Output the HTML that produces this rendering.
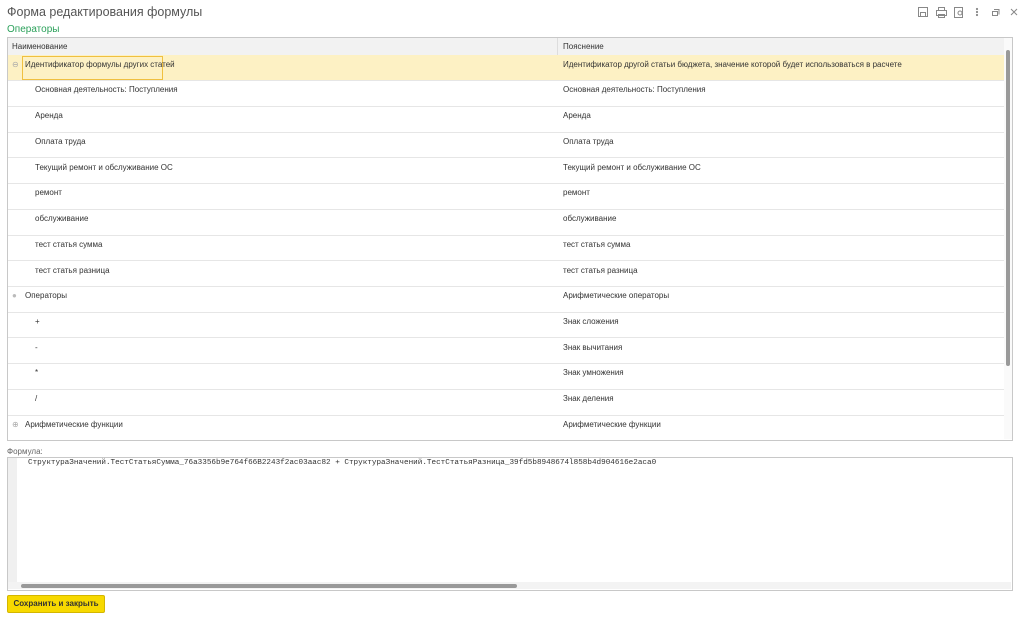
<!DOCTYPE html>
<html><head><meta charset="utf-8"><style>
body{margin:0;width:1024px;height:618px;background:#fff;font-family:"Liberation Sans",sans-serif;position:relative;overflow:hidden;color:#333}
.abs{position:absolute}
.t{font-size:8px;white-space:nowrap}
.row{position:absolute;left:8px;width:996px;height:25px;border-bottom:1px solid #e6e6e6}
</style></head><body>
<div class="abs" style="left:7px;top:5px;font-size:12.5px;color:#555">Форма редактирования формулы</div>
<div class="abs" style="left:7px;top:24px;font-size:10px;color:#2aa05a">Операторы</div>
<svg class="abs" style="left:915px;top:6px" width="105" height="14" fill="none" stroke="#888" stroke-width="1">
<rect x="3.5" y="1.5" width="9" height="9"/><rect x="5.5" y="6.5" width="5" height="4"/>
<rect x="21.5" y="4.5" width="10" height="5"/><rect x="23.5" y="1.5" width="6" height="3"/><rect x="23.5" y="8.5" width="6" height="3"/>
<rect x="39.5" y="1.5" width="8" height="10"/><circle cx="45" cy="7" r="2"/>
<circle cx="62" cy="3" r=".6"/><circle cx="62" cy="6" r=".6"/><circle cx="62" cy="9" r=".6"/>
<rect x="77.5" y="5.5" width="5" height="4"/><path d="M79 3.5h5v5"/>
<path d="M96 3l6 6M102 3l-6 6"/>
</svg>
<div class="abs" style="left:7px;top:37px;width:1004px;height:402px;border:1px solid #c8c8c8"></div>
<div class="abs" style="left:8px;top:38px;width:996px;height:17px;background:#f2f2f2;border-bottom:1px solid #ddd"></div>
<div class="abs" style="left:557px;top:38px;width:1px;height:17px;background:#ddd"></div>
<div class="abs t" style="left:12px;top:42px">Наименование</div>
<div class="abs t" style="left:563px;top:42px">Пояснение</div>
<div class="abs" style="left:1004px;top:38px;width:8px;height:401px;background:#fafafa"></div>
<div class="abs" style="left:1006px;top:50px;width:4px;height:316px;background:#999;border-radius:2px"></div>
<div class="row" style="top:55px;background:#fdf1c4"></div>
<div class="abs" style="left:22px;top:56px;width:139px;height:22px;border:1px solid #f0c040"></div>
<div class="abs t" style="left:12px;top:60px;color:#aaa">⊖</div>
<div class="abs t" style="left:25px;top:60px">Идентификатор формулы других статей</div>
<div class="abs t" style="left:563px;top:60px">Идентификатор другой статьи бюджета, значение которой будет использоваться в расчете</div>
<div class="row" style="top:81px"></div><div class="abs t" style="left:35px;top:85px">Основная деятельность: Поступления</div><div class="abs t" style="left:563px;top:85px">Основная деятельность: Поступления</div>
<div class="row" style="top:107px"></div><div class="abs t" style="left:35px;top:111px">Аренда</div><div class="abs t" style="left:563px;top:111px">Аренда</div>
<div class="row" style="top:132px"></div><div class="abs t" style="left:35px;top:137px">Оплата труда</div><div class="abs t" style="left:563px;top:137px">Оплата труда</div>
<div class="row" style="top:158px"></div><div class="abs t" style="left:35px;top:163px">Текущий ремонт и обслуживание ОС</div><div class="abs t" style="left:563px;top:163px">Текущий ремонт и обслуживание ОС</div>
<div class="row" style="top:184px"></div><div class="abs t" style="left:35px;top:188px">ремонт</div><div class="abs t" style="left:563px;top:188px">ремонт</div>
<div class="row" style="top:210px"></div><div class="abs t" style="left:35px;top:214px">обслуживание</div><div class="abs t" style="left:563px;top:214px">обслуживание</div>
<div class="row" style="top:235px"></div><div class="abs t" style="left:35px;top:240px">тест статья сумма</div><div class="abs t" style="left:563px;top:240px">тест статья сумма</div>
<div class="row" style="top:261px"></div><div class="abs t" style="left:35px;top:266px">тест статья разница</div><div class="abs t" style="left:563px;top:266px">тест статья разница</div>
<div class="row" style="top:287px"></div><div class="abs t" style="left:12px;top:291px;color:#bbb">●</div><div class="abs t" style="left:25px;top:291px">Операторы</div><div class="abs t" style="left:563px;top:291px">Арифметические операторы</div>
<div class="row" style="top:312px"></div><div class="abs t" style="left:35px;top:317px">+</div><div class="abs t" style="left:563px;top:317px">Знак сложения</div>
<div class="row" style="top:338px"></div><div class="abs t" style="left:35px;top:343px">-</div><div class="abs t" style="left:563px;top:343px">Знак вычитания</div>
<div class="row" style="top:364px"></div><div class="abs t" style="left:35px;top:368px">*</div><div class="abs t" style="left:563px;top:368px">Знак умножения</div>
<div class="row" style="top:390px"></div><div class="abs t" style="left:35px;top:394px">/</div><div class="abs t" style="left:563px;top:394px">Знак деления</div>
<div class="abs t" style="left:12px;top:420px;color:#aaa">⊕</div><div class="abs t" style="left:25px;top:420px">Арифметические функции</div><div class="abs t" style="left:563px;top:420px">Арифметические функции</div>
<div class="abs t" style="left:7px;top:447px;color:#666">Формула:</div>
<div class="abs" style="left:7px;top:457px;width:1004px;height:132px;border:1px solid #c8c8c8"></div>
<div class="abs" style="left:8px;top:458px;width:9px;height:124px;background:#f0f0f0"></div>
<div class="abs" style="left:28px;top:459px;font-family:'Liberation Mono',monospace;font-size:7.65px;white-space:nowrap;color:#333">СтруктураЗначений.ТестСтатьяСумма_76a3356b9e764f66B2243f2ac03aac82 + СтруктураЗначений.ТестСтатьяРазница_39fd5b8948674l858b4d904616e2aca0</div>
<div class="abs" style="left:8px;top:582px;width:1003px;height:7px;background:#f3f3f3"></div>
<div class="abs" style="left:21px;top:584px;width:496px;height:4px;background:#999;border-radius:2px"></div>
<div class="abs" style="left:7px;top:595px;width:96px;height:16px;background:#f7d900;border:1px solid #d4b600;border-radius:2px;font-size:8px;font-weight:bold;color:#333;text-align:center;line-height:16px">Сохранить и закрыть</div>
</body></html>
